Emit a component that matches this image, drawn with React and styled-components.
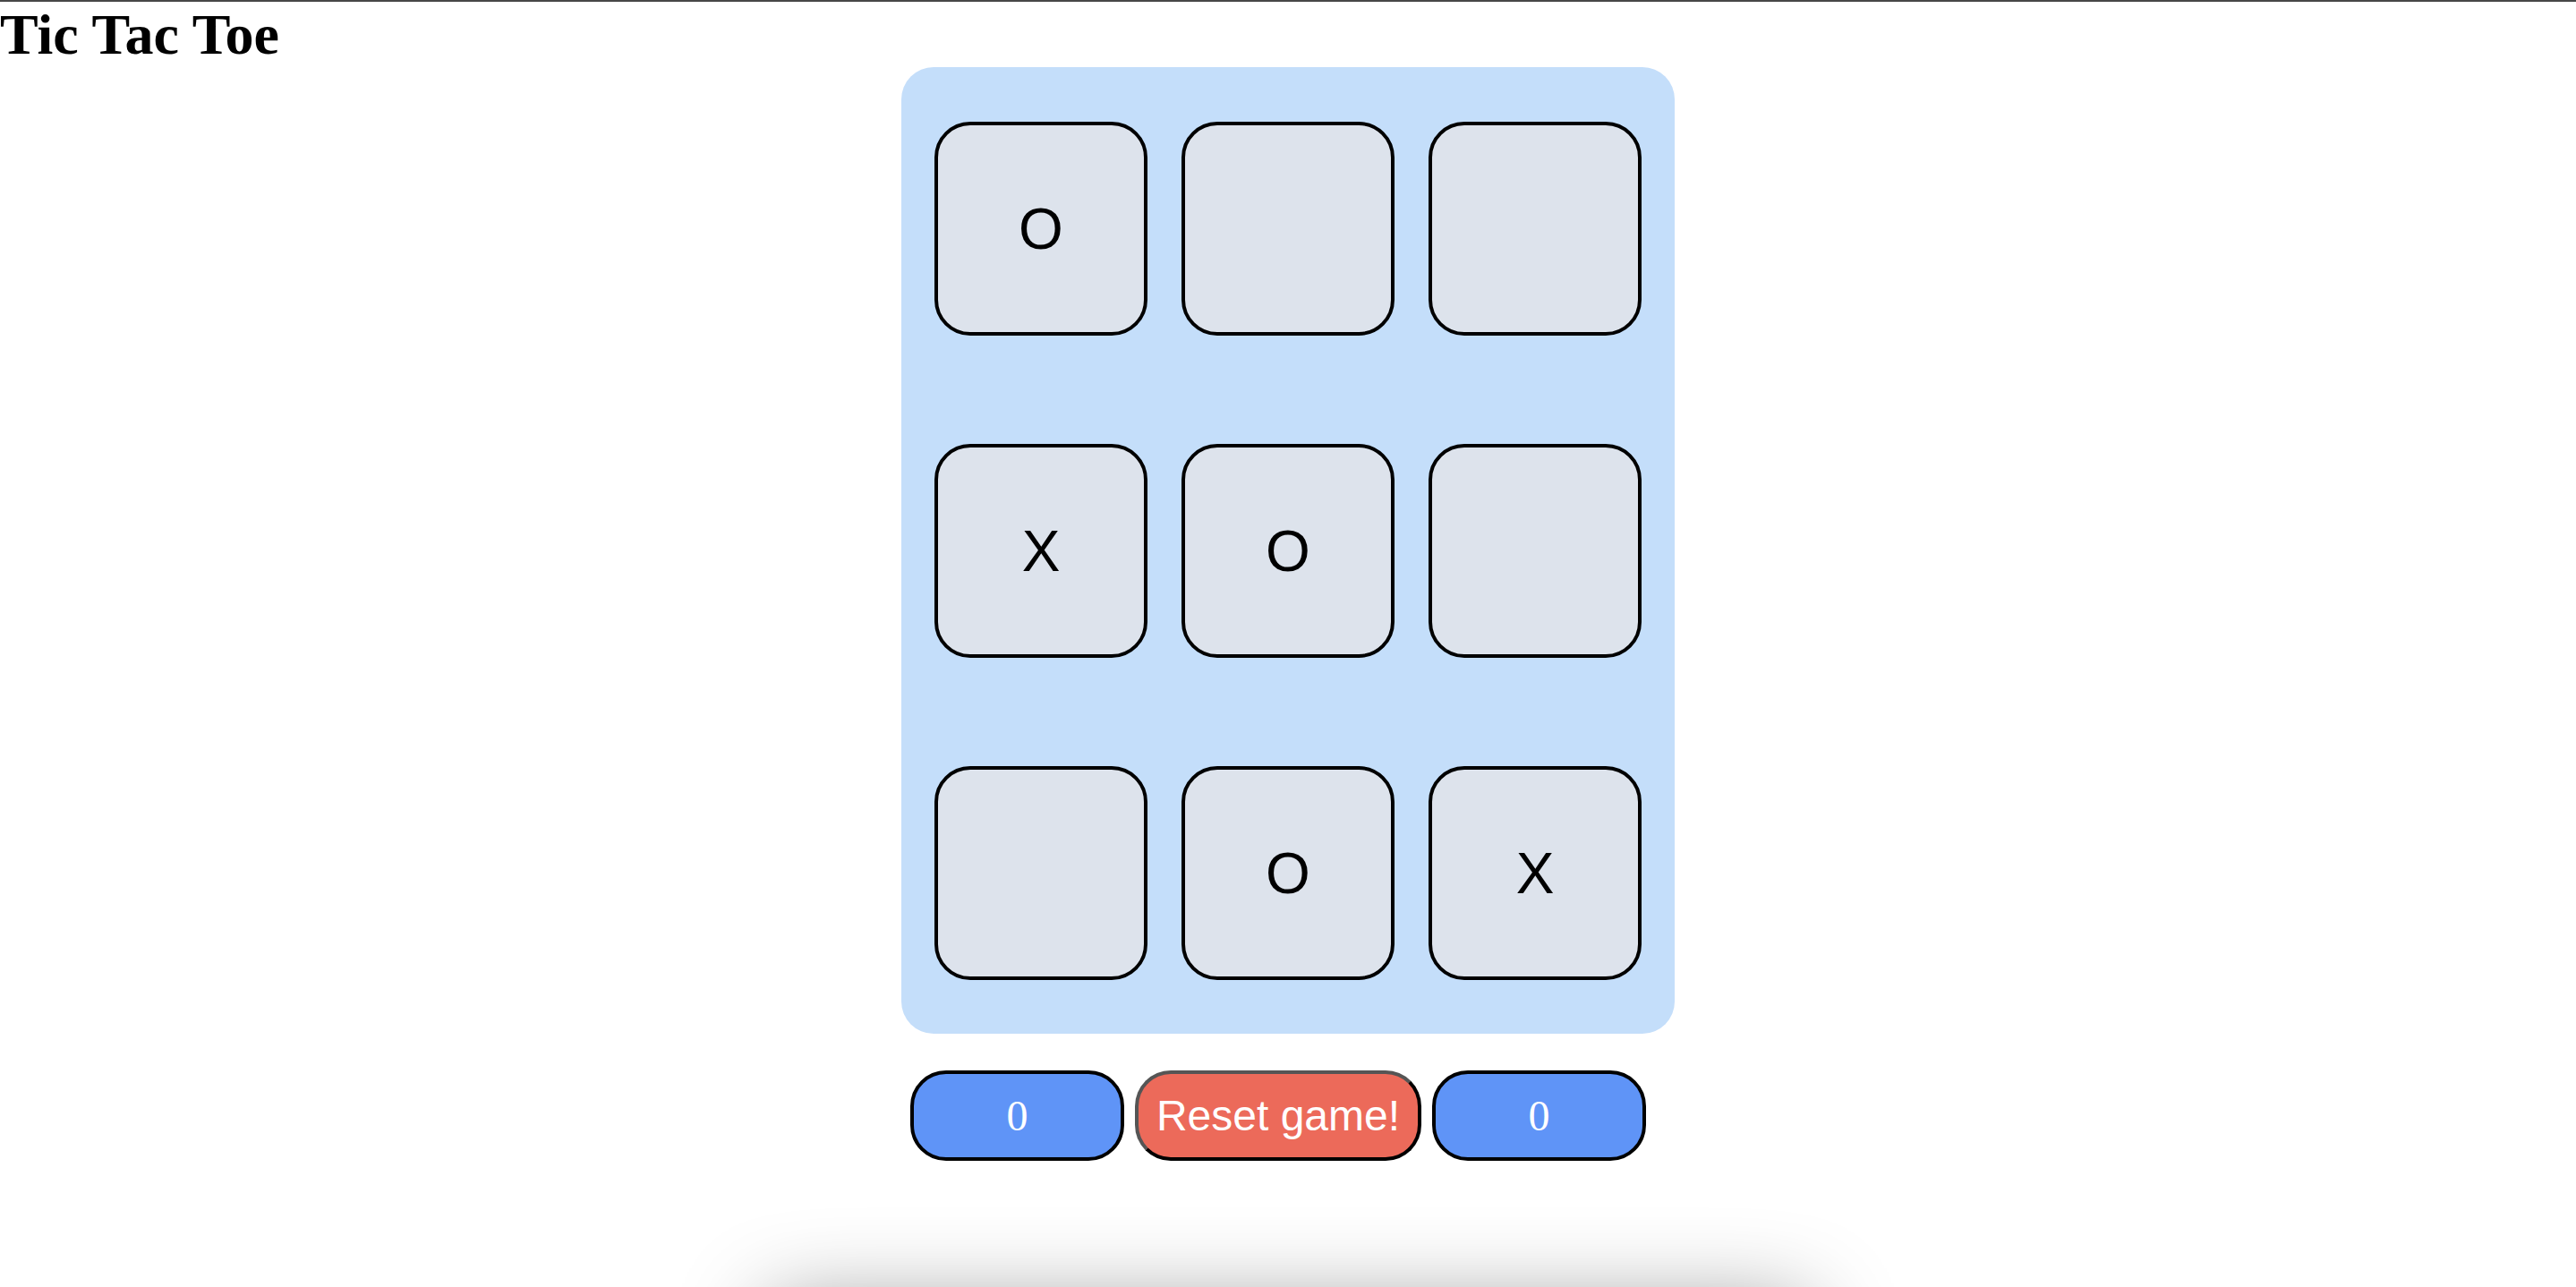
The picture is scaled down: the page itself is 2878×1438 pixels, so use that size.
import React, { useState } from "react";
import styled, { createGlobalStyle } from "styled-components";

const GlobalStyle = createGlobalStyle`
  html, body {
    margin: 0;
    padding: 0;
    background: #ffffff;
  }
  body {
    border-top: 2px solid #474747;
    overflow: hidden;
  }
`;

const Page = styled.main`
  display: flex;
  flex-direction: column;
  min-height: 1436px;
`;

const Title = styled.h1`
  margin: 0;
  font-family: "Liberation Serif", "Times New Roman", serif;
  font-weight: 700;
  font-size: 64px;
  line-height: 73px;
  color: #000;
`;

const Board = styled.div`
  box-sizing: border-box;
  width: 864px;
  margin: 0 auto;
  padding: 61px 37px 60px;
  background: #c4defa;
  border-radius: 36px;
  display: grid;
  grid-template-columns: repeat(3, 238px);
  grid-auto-rows: 239px;
  column-gap: 38px;
  row-gap: 121px;
`;

const Cell = styled.button`
  box-sizing: border-box;
  margin: 0;
  padding: 0;
  border: 4px solid #000;
  border-radius: 40px;
  background: #dde3ec;
  display: flex;
  align-items: center;
  justify-content: center;
  font-family: "Liberation Sans", Arial, sans-serif;
  font-size: 64px;
  color: #000;
  cursor: pointer;
`;

const Controls = styled.div`
  display: flex;
  justify-content: center;
  gap: 12px;
  margin-top: 41px;
  padding-right: 22px;
`;

const PillButton = styled.button`
  box-sizing: border-box;
  height: 101px;
  margin: 0;
  padding: 0;
  border-radius: 40px;
  color: #fff;
  display: flex;
  align-items: center;
  justify-content: center;
  cursor: pointer;
`;

const ScoreButton = styled(PillButton)`
  width: 239px;
  border: 4px solid #000;
  background: #5f94f7;
  font-family: "Liberation Serif", "Times New Roman", serif;
  font-size: 48px;
`;

const ResetButton = styled(PillButton)`
  width: 320px;
  border-width: 4px;
  border-style: solid;
  border-color: #555555 #000000 #000000 #555555;
  background: #ec6a5a;
  font-family: "Liberation Sans", Arial, sans-serif;
  font-size: 48px;
`;

const Footer = styled.div`
  width: 1160px;
  height: 240px;
  margin: 163px auto 0;
  background: #ffffff;
  box-shadow: 0 0 100px rgba(0, 0, 0, 0.42);
  flex-shrink: 0;
`;

const INITIAL = ["O", "", "", "X", "O", "", "", "O", "X"];

export default function App() {
  const [cells, setCells] = useState(INITIAL);
  const [scores] = useState({ x: 0, o: 0 });

  return (
    <>
      <GlobalStyle />
      <Page>
        <Title>Tic Tac Toe</Title>
        <Board>
          {cells.map((v, i) => (
            <Cell key={i} type="button">
              {v}
            </Cell>
          ))}
        </Board>
        <Controls>
          <ScoreButton type="button">{scores.x}</ScoreButton>
          <ResetButton type="button" onClick={() => setCells(Array(9).fill(""))}>
            Reset game!
          </ResetButton>
          <ScoreButton type="button">{scores.o}</ScoreButton>
        </Controls>
        <Footer />
      </Page>
    </>
  );
}
